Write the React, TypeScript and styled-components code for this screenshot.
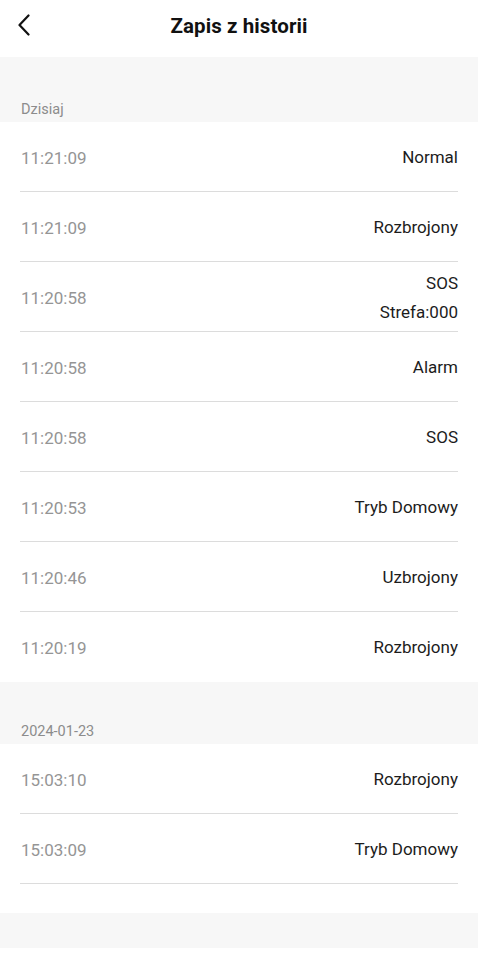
import React from "react";
import styled, { createGlobalStyle } from "styled-components";

const Global = createGlobalStyle`
  html, body { margin: 0; padding: 0; background: #ffffff; }
  body { font-family: Roboto, "Noto Sans", Arial, sans-serif; -webkit-font-smoothing: antialiased; }
`;

const Page = styled.div`
  width: 478px;
  min-height: 960px;
  background: #ffffff;
  display: flex;
  flex-direction: column;
`;

const Header = styled.header`
  height: 57px;
  display: grid;
  grid-template-columns: 60px 1fr 60px;
  align-items: center;
  background: #ffffff;
`;

const BackButton = styled.button`
  border: none;
  background: none;
  padding: 0 0 7px 17px;
  display: flex;
  align-items: center;
  justify-content: flex-start;
  cursor: pointer;
`;

const Title = styled.h1`
  margin: 0 0 6px 0;
  text-align: center;
  font-size: 20.5px;
  font-weight: 700;
  color: #111111;
  letter-spacing: 0.1px;
`;

const SectionHead = styled.div<{ $h: number }>`
  height: ${(p) => p.$h}px;
  background: #f7f7f7;
  display: flex;
  align-items: flex-end;
  padding: 0 21px 4px;
  box-sizing: border-box;
  font-size: 14.5px;
  color: #8c8c8c;
`;

const List = styled.div<{ $footer: number }>`
  background: #ffffff;
  padding-bottom: ${(p) => p.$footer}px;
`;

const Row = styled.div<{ $divider: boolean }>`
  margin: 0 20px;
  height: 70px;
  padding-top: 2px;
  box-sizing: border-box;
  display: flex;
  align-items: center;
  justify-content: space-between;
  border-bottom: ${(p) => (p.$divider ? "1.5px solid #dcdcdc" : "1.5px solid transparent")};
`;

const Time = styled.span`
  font-size: 17px;
  color: #959595;
  padding-left: 1px;
`;

const Events = styled.div`
  display: flex;
  flex-direction: column;
  align-items: flex-end;
  gap: 8px;
  font-size: 17px;
  color: #1c1c1c;
  line-height: 21px;
`;

const Spacer = styled.div`
  height: 35px;
  background: #f7f7f7;
`;

type Entry = { time: string; events: string[] };

const today: Entry[] = [
  { time: "11:21:09", events: ["Normal"] },
  { time: "11:21:09", events: ["Rozbrojony"] },
  { time: "11:20:58", events: ["SOS", "Strefa:000"] },
  { time: "11:20:58", events: ["Alarm"] },
  { time: "11:20:58", events: ["SOS"] },
  { time: "11:20:53", events: ["Tryb Domowy"] },
  { time: "11:20:46", events: ["Uzbrojony"] },
  { time: "11:20:19", events: ["Rozbrojony"] },
];

const older: Entry[] = [
  { time: "15:03:10", events: ["Rozbrojony"] },
  { time: "15:03:09", events: ["Tryb Domowy"] },
];

const Chevron = () => (
  <svg width="14" height="22" viewBox="0 0 14 22" fill="none">
    <path d="M11.5 1.5 L2.5 11 L11.5 20.5" stroke="#111" strokeWidth="2.2" strokeLinecap="round" strokeLinejoin="round" />
  </svg>
);

export default function App() {
  return (
    <Page>
      <Global />
      <Header>
        <BackButton aria-label="back">
          <Chevron />
        </BackButton>
        <Title>Zapis z historii</Title>
        <div />
      </Header>
      <SectionHead $h={65}>Dzisiaj</SectionHead>
      <List $footer={0}>
        {today.map((e, i) => (
          <Row key={i} $divider={i < today.length - 1}>
            <Time>{e.time}</Time>
            <Events>
              {e.events.map((ev) => (
                <span key={ev}>{ev}</span>
              ))}
            </Events>
          </Row>
        ))}
      </List>
      <SectionHead $h={62}>2024-01-23</SectionHead>
      <List $footer={29}>
        {older.map((e, i) => (
          <Row key={i} $divider>
            <Time>{e.time}</Time>
            <Events>
              {e.events.map((ev) => (
                <span key={ev}>{ev}</span>
              ))}
            </Events>
          </Row>
        ))}
      </List>
      <Spacer />
    </Page>
  );
}
